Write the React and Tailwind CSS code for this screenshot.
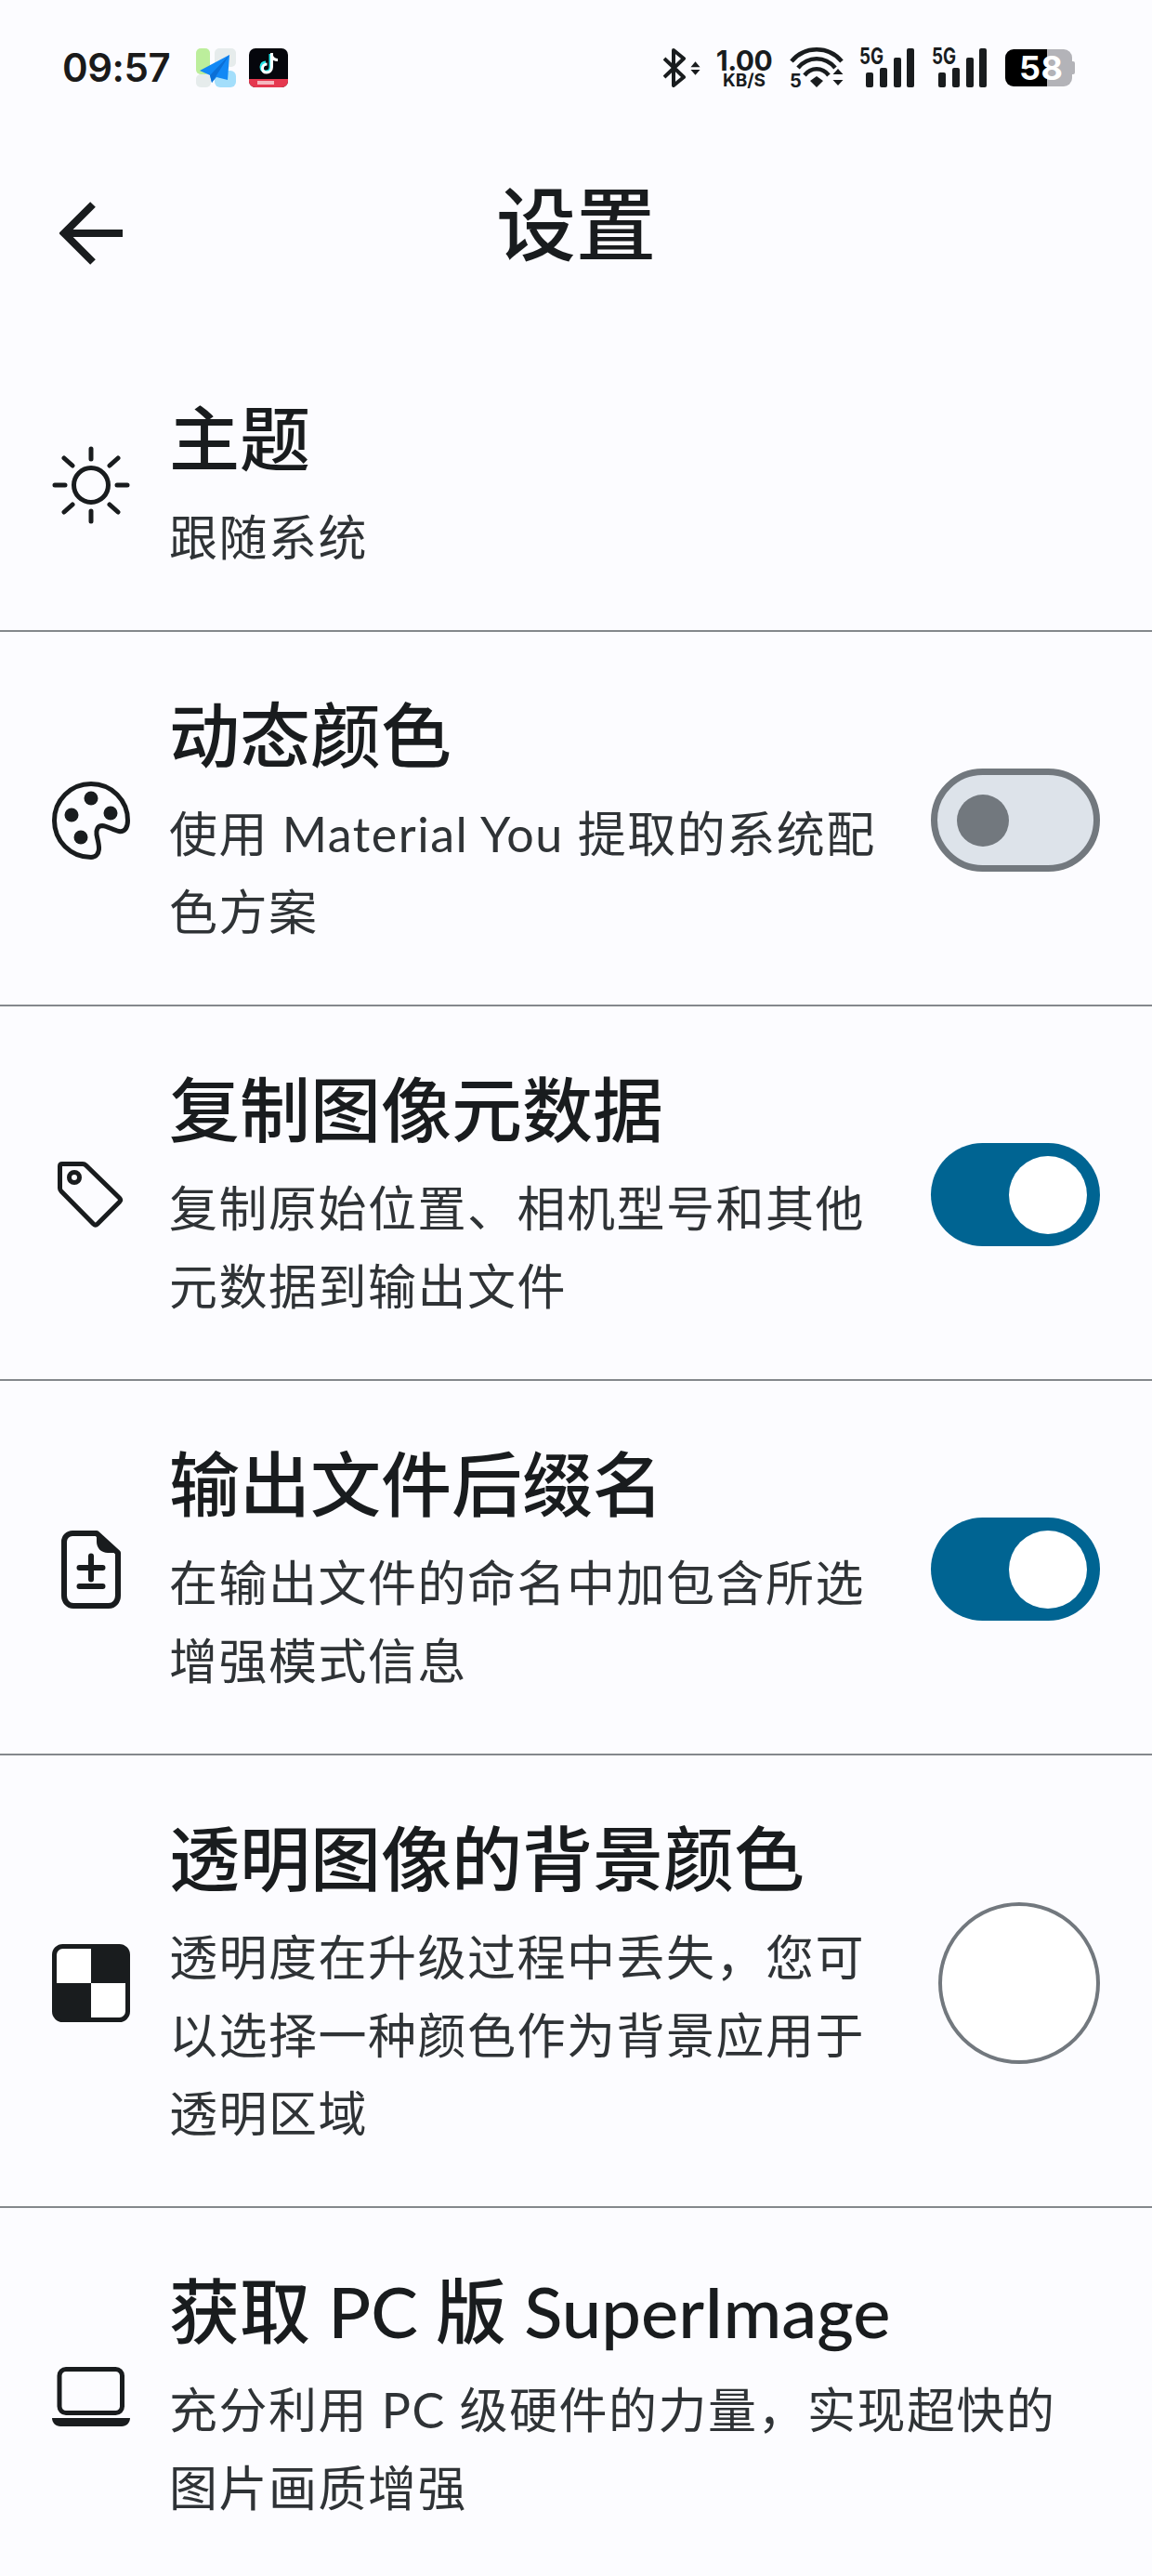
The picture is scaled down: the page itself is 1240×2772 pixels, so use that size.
import React from "react";

const sans = "font-['Lato','Noto_Sans_CJK_SC',sans-serif]";

const Sun = () => (
  <svg viewBox="0 0 84 84" className="h-[84px] w-[84px]" fill="none" stroke="#191c1e" strokeWidth="5" strokeLinecap="round">
    <circle cx="42" cy="42" r="18.5" />
    <path d="M42 3v11M42 70v11M3 42h11M70 42h11M13 13l9 8M62 63l9 8M71 13l-9 8M22 63l-9 8" />
  </svg>
);

const Palette = () => (
  <svg viewBox="0 0 84 84" className="h-[84px] w-[84px]" fill="none">
    <path
      d="M42 2.500C64 2.500 81.500 20 81.500 42C81.500 50 78 54.500 72 53.500C66 52.500 60 48 54 47.500C49 47.500 47.500 52 48 57C49 63 51 68 50.500 73C50 78 47 81.500 42 81.500C20 81.500 2.500 64 2.500 42C2.500 20 20 2.500 42 2.500Z"
      stroke="#191c1e"
      strokeWidth="5"
    />
    <g fill="#191c1e">
      <circle cx="42" cy="18" r="7.500" />
      <circle cx="21" cy="36" r="7.500" />
      <circle cx="63" cy="34" r="7.500" />
      <circle cx="31" cy="60" r="7.500" />
    </g>
  </svg>
);

const Tag = () => (
  <svg viewBox="0 0 84 84" className="h-[84px] w-[84px]" fill="none">
    <g transform="translate(0 -2)">
      <path
        d="M11 10.500H33C34.500 10.500 35.500 11 36.500 12L72.500 47C74 48.500 74 50 72.500 51.500L49 75C47.500 76.500 46 76.500 44.500 75L10 40C9 39 8.500 38 8.500 36.500V13C8.500 11.500 9.500 10.500 11 10.500Z"
        stroke="#191c1e"
        strokeWidth="5"
        strokeLinejoin="round"
      />
      <circle cx="24" cy="25" r="5.500" stroke="#191c1e" strokeWidth="5" />
    </g>
  </svg>
);

const FileDiff = () => (
  <svg viewBox="0 0 84 84" className="h-[84px] w-[84px]" fill="none">
    <path d="M22 3H48L71 24V70C71 76 67 81 61 81H23C17 81 13 76 13 70V12C13 7 17 3 22 3Z" stroke="#191c1e" strokeWidth="6" strokeLinejoin="round" />
    <path d="M48 1V12C48 19 53 24 60 24H73Z" fill="#191c1e" />
    <path d="M29.500 40H54.500M42 27.500V52.500M29.500 60H54.500" stroke="#191c1e" strokeWidth="6" strokeLinecap="round" />
  </svg>
);

const Checker = () => (
  <svg viewBox="0 0 84 84" className="h-[84px] w-[84px]" fill="none">
    <rect x="2.500" y="2.500" width="79" height="79" rx="9" fill="#fff" stroke="#191c1e" strokeWidth="5" />
    <path d="M42 2H74C79 2 82 5 82 10V42H42ZM2 42H42V82H10C5 82 2 79 2 74Z" fill="#191c1e" />
  </svg>
);

const Laptop = () => (
  <svg viewBox="0 0 84 64" className="h-[64px] w-[84px]" fill="none">
    <rect x="8" y="2.500" width="67.500" height="47" rx="7" stroke="#191c1e" strokeWidth="5" />
    <path d="M0 55H84C84 60 80 64 75 64H9C4 64 0 60 0 55Z" fill="#191c1e" />
  </svg>
);

const Arrows = ({ className }) => (
  <svg viewBox="0 0 12 16" className={className} fill="#191c1e">
    <path d="M6 0L11.500 6.500H0.500ZM0.500 9.500H11.500L6 16Z" />
  </svg>
);

const Signal = () => (
  <svg viewBox="0 0 59 42" className="h-[42px] w-[59px] overflow-visible" fill="#191c1e">
    <text x="0" y="17" fontFamily="Inter" fontWeight="700" fontSize="24" textLength="26" lengthAdjust="spacingAndGlyphs">5G</text>
    <rect x="7" y="26" width="8" height="16" rx="2" />
    <rect x="22" y="21" width="8" height="21" rx="2" />
    <rect x="37" y="10" width="8" height="32" rx="2" />
    <rect x="51" y="0" width="8" height="42" rx="2" />
  </svg>
);

const StatusBar = () => (
  <div className="flex h-[148px] items-center pb-[2px] pl-[67px] pr-[82px]">
    <span className="w-[144px] font-['Inter',sans-serif] text-[42px] font-semibold leading-none tracking-[-0.5px] text-[#1a1a1a]">09:57</span>
    <svg viewBox="0 0 43 42" className="h-[42px] w-[43px]">
      <rect x="0" y="0" width="15" height="28" rx="5" fill="#bcee9c" />
      <rect x="20" y="0" width="23" height="20" rx="5" fill="#e6ecec" />
      <rect x="0" y="28" width="16" height="14" rx="5" fill="#e6ecec" />
      <rect x="20" y="24" width="23" height="18" rx="6" fill="#a3defb" />
      <path d="M36 7L4 24L15 29L17 37L22 31L34 34Z" fill="#1288f5" />
      <path d="M36 7L15 29L17 37Z" fill="#0b6fd6" />
    </svg>
    <svg viewBox="0 0 42 42" className="ml-[14px] h-[42px] w-[42px]">
      <rect width="42" height="42" rx="7" fill="#05060c" />
      <path d="M0 33H42V35C42 39 39 42 35 42H7C3 42 0 39 0 35Z" fill="#e5384f" />
      <path d="M23 6V20C23 23 21 25 18 25C15 25 13 23 13 20C13 17 15 15 18 15" fill="none" stroke="#25e4e6" strokeWidth="3" />
      <path d="M24.500 5V20C24.500 24 22 26 19 26C16 26 14.500 24 14.500 21.500C14.500 19 16.500 17 19.500 17M24.500 8C25.500 11 28 12.500 31 12.500" fill="none" stroke="#fff" strokeWidth="3" />
      <rect x="9" y="35" width="18" height="4" fill="#f5b8bf" />
    </svg>
    <div className="ml-auto flex items-center">
      <div className="flex w-[40px] items-center">
        <svg viewBox="0 0 24 42" className="h-[42px] w-[24px]" fill="none" stroke="#191c1e" strokeWidth="4" strokeLinejoin="round">
          <path d="M1 11L22 31L11 40V2L22 11L1 31" />
        </svg>
        <Arrows className="ml-[5px] h-[15px] w-[11px]" />
      </div>
      <div className="ml-[15px] flex w-[64px] flex-col items-center font-['Inter',sans-serif] font-bold text-[#191c1e]">
        <span className="h-[27px] text-[30px] leading-[26px] tracking-[-0.5px]">1.00</span>
        <span className="text-[19px] leading-[15px]">KB/S</span>
      </div>
      <svg viewBox="0 0 58 42" className="ml-[17px] h-[42px] w-[58px] overflow-visible" fill="none" stroke="#191c1e" strokeWidth="4.500">
        <path d="M2 14C16 -3 42 -3 56 14" />
        <path d="M9 21C20 8 38 8 49 21" />
        <path d="M16 29C23 20 35 20 42 29" />
        <path d="M22 35L29 30L36 35L29 42Z" fill="#191c1e" stroke="none" />
        <text x="0" y="42" fontFamily="Inter" fontWeight="700" fontSize="20" fill="#191c1e" stroke="none">5</text>
        <path d="M52 22L57.500 28H46.500ZM46.500 34H57.500L52 40Z" fill="#191c1e" stroke="none" />
      </svg>
      <div className="ml-[17px]"><Signal /></div>
      <div className="ml-[19px]"><Signal /></div>
      <div className="relative ml-[20px] flex h-[40px] w-[76px] items-center">
        <div className="h-full w-[45px] rounded-l-[9px] bg-black" />
        <div className="h-full w-[27px] rounded-r-[9px] bg-[#b3b3b8]" />
        <div className="h-[14px] w-[3px] rounded-r-[2px] bg-[#b3b3b8]" />
        <span className="absolute left-[15px] font-['Inter',sans-serif] text-[36px] font-bold leading-none tracking-[0.5px] text-white">58</span>
      </div>
    </div>
  </div>
);

const Switch = ({ on }) =>
  on ? (
    <div className="mt-[4px] flex h-[111px] w-[182px] shrink-0 items-center justify-end rounded-full bg-[#006492] pr-[14px]">
      <div className="h-[84px] w-[84px] rounded-full bg-white" />
    </div>
  ) : (
    <div className="mt-[4px] flex h-[111px] w-[182px] shrink-0 items-center rounded-full border-[7px] border-[#72787e] bg-[#dde3ea] pl-[21px]">
      <div className="h-[56px] w-[56px] rounded-full bg-[#72787e]" />
    </div>
  );

const rows = [
  { icon: <Sun />, title: "主题", lines: ["跟随系统"] },
  { icon: <Palette />, title: "动态颜色", lines: ["使用 Material You 提取的系统配", "色方案"], right: <Switch on={false} /> },
  { icon: <Tag />, title: "复制图像元数据", lines: ["复制原始位置、相机型号和其他", "元数据到输出文件"], right: <Switch on /> },
  { icon: <FileDiff />, title: "输出文件后缀名", lines: ["在输出文件的命名中加包含所选", "增强模式信息"], right: <Switch on /> },
  {
    icon: <Checker />,
    title: "透明图像的背景颜色",
    lines: ["透明度在升级过程中丢失，您可", "以选择一种颜色作为背景应用于", "透明区域"],
    right: <div className="ml-[8px] mt-[4px] h-[174px] w-[174px] shrink-0 rounded-full border-[4px] border-[#72787e] bg-white" />,
  },
  { icon: <Laptop />, title: "获取 PC 版 SuperImage", lines: ["充分利用 PC 级硬件的力量，实现超快的", "图片画质增强"], last: true },
];

const Row = ({ icon, title, lines, right, last }) => (
  <div className={`flex items-center px-[56px] ${last ? "" : "border-b-2 border-[#84888c]"}`}>
    <div className="mt-[4px] flex w-[84px] shrink-0 justify-center">{icon}</div>
    <div className="ml-[42px] min-w-0 flex-1 pb-[58px] pt-[56px]">
      <div className="h-[112px] whitespace-nowrap text-[76px] font-medium leading-[109px] text-[#191c1e]">{title}</div>
      <div className="mt-[7px] text-[52px] leading-[84px] tracking-[1.5px] text-[#2f3336]">
        {lines.map((line) => (
          <div key={line} className="whitespace-nowrap">{line}</div>
        ))}
      </div>
    </div>
    {right}
  </div>
);

export default function App() {
  return (
    <div className={`h-[2772px] w-[1240px] overflow-hidden bg-[#fcfcff] ${sans}`}>
      <StatusBar />
      <div className="grid h-[213px] grid-cols-[1fr_auto_1fr] items-start pt-[20px]">
        <div className="pl-[64px] pt-[49px]">
          <svg viewBox="0 0 70 68" className="h-[68px] w-[70px]" fill="none" stroke="#191c1e" strokeWidth="8">
            <path d="M68 34H6M36 3L5 34L36 65" />
          </svg>
        </div>
        <h1 className="text-[86px] font-medium leading-[146px] text-[#191c1e]">设置</h1>
      </div>
      {rows.map((row) => (
        <Row key={row.title} {...row} />
      ))}
    </div>
  );
}
